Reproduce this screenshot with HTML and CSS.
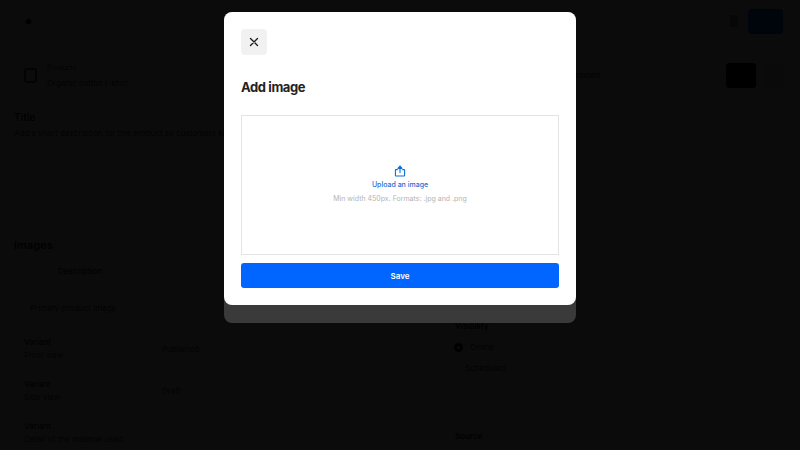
FILE: index.html
```html
<!DOCTYPE html>
<html lang="en">
<head>
<meta charset="utf-8">
<title>Add image</title>
<link rel="stylesheet" href="styles.css">
</head>
<body>
<div class="page">
  <header class="topbar">
    <svg class="logo" viewBox="0 0 10 10"><circle cx="5" cy="5" r="4"/></svg>
    <div class="top-actions"><span class="top-icon"></span><span class="publish"></span></div>
  </header>
  <div class="titlebar">
    <span class="thumb"></span>
    <div class="title-text"><span class="crumb">Products</span><span class="name">Organic cotton t-shirt</span></div>
    <span class="status">Updated</span>
    <span class="black-btn"></span>
    <span class="ghost-btn"></span>
  </div>
  <section class="intro">
    <h2 class="intro-title">Title</h2>
    <p class="intro-desc">Add a short description for this product so customers know what it is</p>
  </section>
  <section class="table-area">
    <div class="table">
      <h2 class="table-title">Images</h2>
      <div class="thead"><span>Description</span><span>Status</span></div>
      <p class="row-lone">Primary product image</p>
      <div class="row"><div><b>Variant</b><br>Front view</div><span>Published</span></div>
      <div class="row"><div><b>Variant</b><br>Side view</div><span>Draft</span></div>
      <div class="row"><div><b>Variant</b><br>Detail of the material used</div><span></span></div>
    </div>
    <aside class="side">
      <h3 class="side-title">Visibility</h3>
      <div class="radio"><span class="dot"></span>Online</div>
      <div class="side-note">Scheduled</div>
      <h3 class="side-title side-second">Source</h3>
    </aside>
  </section>
</div>
<div class="overlay">
  <div class="modal-shell">
    <div class="modal">
      <button class="close" type="button" aria-label="Close">
        <svg viewBox="0 0 10 10" width="10" height="10"><path d="M1.5 1.5l7 7M8.5 1.5l-7 7"/></svg>
      </button>
      <h1 class="modal-title">Add image</h1>
      <div class="dropzone">
        <svg class="upload" viewBox="0 0 12 12" width="12" height="12"><path class="up-tray" d="M3.4 4.6H2a.6.6 0 0 0-.6.6v5.2a.6.6 0 0 0 .6.6h8a.6.6 0 0 0 .6-.6V5.2a.6.6 0 0 0-.6-.6H8.6"/><path class="up-arrow" d="M6 7.6V1.6M4 3.4L6 1l2 2.4z"/></svg>
        <span class="upload-link">Upload an image</span>
        <span class="upload-hint">Min width 450px. Formats: .jpg and .png</span>
      </div>
      <button class="save" type="button">Save</button>
    </div>
  </div>
</div>
</body>
</html>
```
FILE: styles.css
```css
* { box-sizing: border-box; }
html, body { margin: 0; height: 450px; overflow: hidden; }
body { font-family: Inter, "Liberation Sans", sans-serif; background: #fff; color: #111; position: relative; font-size: 8px; }

.page { height: 450px; overflow: hidden; }
.topbar { height: 42px; display: flex; align-items: center; justify-content: space-between; padding: 0 17px 0 25px; }
.logo { width: 7px; height: 7px; fill: #111; }
.top-actions { display: flex; align-items: center; gap: 10px; }
.top-icon { width: 8px; height: 12px; background: #999; }
.publish { width: 35px; height: 25px; background: #06f; border-radius: 3px; }
.titlebar { height: 50px; display: flex; align-items: center; padding: 0 15px 0 24px; margin-top: 8px; }
.thumb { width: 13px; height: 15px; border: 2px solid #555; border-radius: 3px; margin-right: 10px; }
.title-text { display: flex; flex-direction: column; gap: 6px; flex: 1; color: #333; }
.crumb { font-size: 7px; }
.name { font-size: 8px; }
.status { color: #333; margin-right: 126px; }
.black-btn { width: 30px; height: 25px; background: #000; border-radius: 3px; margin-right: 9px; }
.ghost-btn { width: 20px; height: 25px; background: #ddd; border-radius: 3px; }
.intro { padding: 0 14px; margin-top: 11px; }
.intro-title { margin: 0 0 5px; font-size: 10px; font-weight: 600; }
.intro-desc { margin: 0; font-size: 8px; color: #333; white-space: nowrap; }
.table-area { display: flex; padding: 0 14px; margin-top: 100px; }
.table { width: 427px; }
.table-title { margin: 0 0 14px; font-size: 11px; font-weight: 600; }
.thead { display: grid; grid-template-columns: 176px 1fr; padding-left: 44px; font-size: 8px; font-weight: 500; }
.row-lone { margin: 27px 0 15px 16px; font-size: 8px; color: #333; }
.row { display: grid; grid-template-columns: 138px 1fr; align-items: center; height: 42px; padding-left: 10px; line-height: 13px; color: #333; }
.row b { font-weight: 500; color: #111; }
.side { padding-left: 14px; padding-top: 83px; }
.side-title { margin: 0; font-size: 8px; font-weight: 600; }
.radio { display: flex; align-items: center; gap: 7px; margin-top: 11px; color: #333; }
.dot { width: 9px; height: 9px; border-radius: 50%; border: 3px solid #111; margin-left: -1px; }
.side-note { margin: 11px 0 0 10px; color: #333; }
.side-second { margin-top: 58px; }

.overlay { position: absolute; inset: 0; background: rgba(0, 0, 0, .955); display: flex; justify-content: center; align-items: flex-start; padding-top: 12px; }
.modal-shell { width: 352px; padding-bottom: 18px; background: #3a3a3a; border-radius: 8px; }
.modal { background: #fff; border-radius: 8px; padding: 17px; display: flex; flex-direction: column; height: 293px; }
.close { width: 26px; height: 26px; padding: 0; border: 0; border-radius: 4px; background: #f1f1f1; display: flex; align-items: center; justify-content: center; }
.close path { fill: none; stroke: #1c1c1c; stroke-width: 1.3; stroke-linecap: round; }
.modal-title { margin: 24px 0 0; font-size: 13px; line-height: 17px; font-weight: 700; color: #222; letter-spacing: -.4px; }
.dropzone { margin-top: 19px; height: 140px; border: 1px solid #e4e4e4; display: flex; flex-direction: column; align-items: center; padding-top: 49px; }
.upload path { fill: none; stroke: #0a6fe0; stroke-width: 1.1; stroke-linecap: round; stroke-linejoin: round; }
.upload .up-arrow { fill: #0a6fe0; }
.upload-link { margin-top: 3px; font-size: 7px; line-height: 10px; font-weight: 500; color: #1a6fd6; }
.upload-hint { margin-top: 4px; font-size: 7px; line-height: 10px; color: #b4b4b4; }
.save { margin-top: 8px; height: 25px; border: 0; border-radius: 3px; background: #06f; color: #fff; font: 600 8px Inter, "Liberation Sans", sans-serif; }
```
